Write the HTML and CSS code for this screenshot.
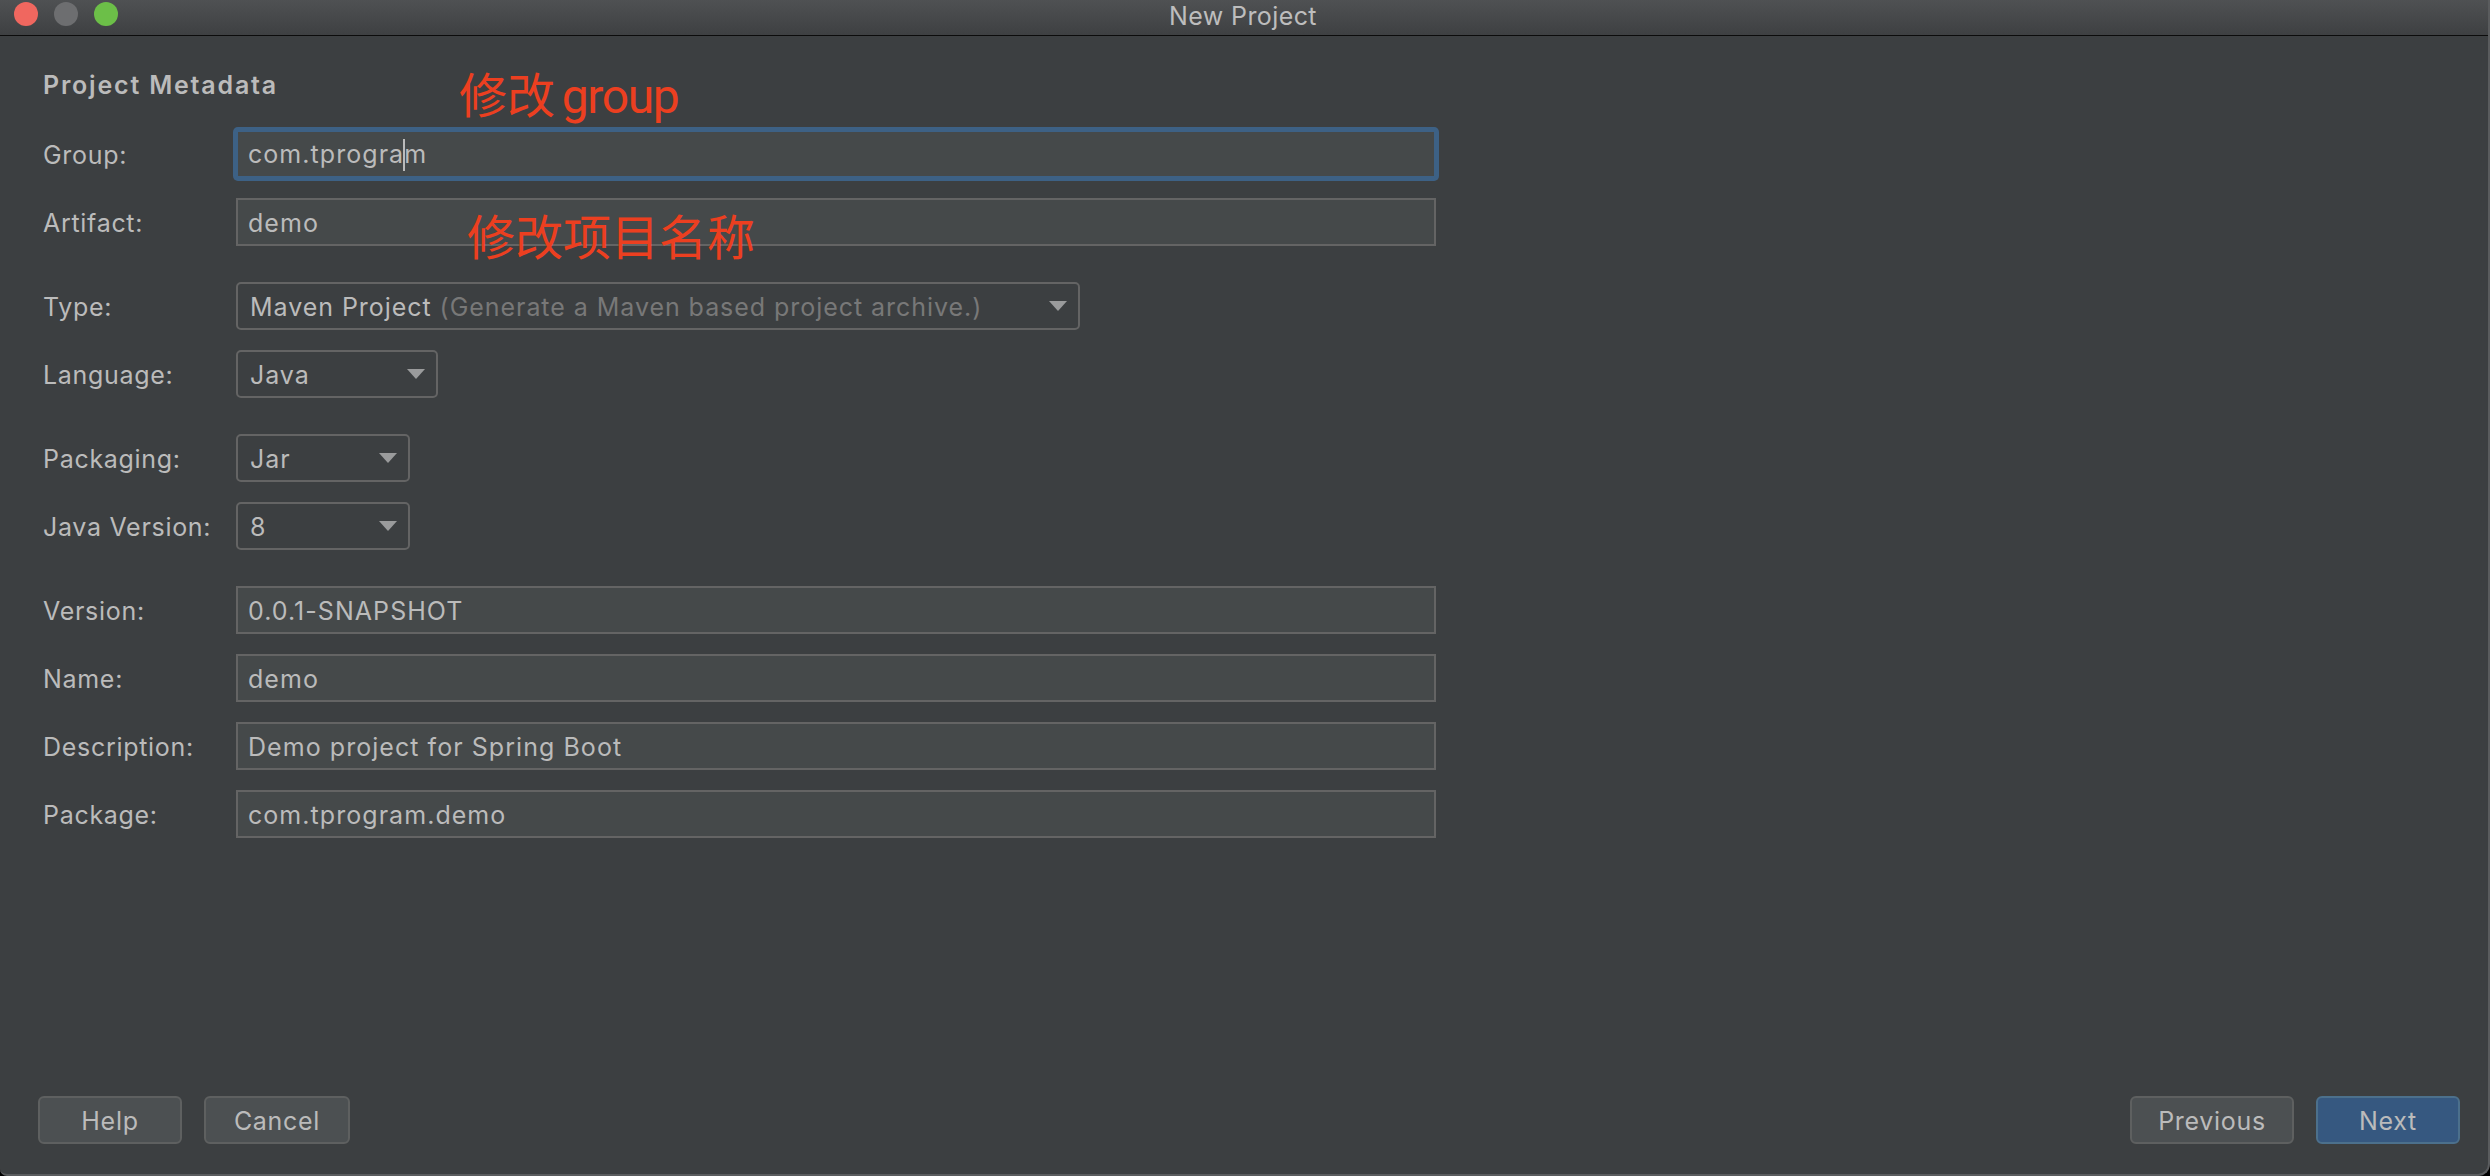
FILE: index.html
```html
<!DOCTYPE html>
<html lang="en">
<head>
<meta charset="utf-8">
<title>New Project</title>
<link rel="stylesheet" href="styles.css">
</head>
<body>
<div class="window">
  <header class="titlebar">
    <div class="lights">
      <span class="light red"></span>
      <span class="light grey"></span>
      <span class="light green"></span>
    </div>
    <div class="title">New Project</div>
  </header>
  <main class="content">
    <h1 class="heading">Project Metadata</h1>
    <div class="form">
      <section class="group">
        <div class="row"><span class="label">Group:</span><div class="field focus"><span class="caret-wrap">com.tprogra<span class="caret"></span>m</span></div></div>
        <div class="row"><span class="label">Artifact:</span><div class="field">demo</div></div>
      </section>
      <section class="group">
        <div class="row"><span class="label">Type:</span><div class="select w-type"><span>Maven Project <span class="hint">(Generate a Maven based project archive.)</span></span><span class="arrow"></span></div></div>
        <div class="row"><span class="label">Language:</span><div class="select w-lang"><span>Java</span><span class="arrow"></span></div></div>
      </section>
      <section class="group">
        <div class="row"><span class="label">Packaging:</span><div class="select w-pack"><span>Jar</span><span class="arrow"></span></div></div>
        <div class="row"><span class="label">Java Version:</span><div class="select w-pack"><span>8</span><span class="arrow"></span></div></div>
      </section>
      <section class="group">
        <div class="row"><span class="label">Version:</span><div class="field">0.0.1-SNAPSHOT</div></div>
        <div class="row"><span class="label">Name:</span><div class="field">demo</div></div>
        <div class="row"><span class="label">Description:</span><div class="field">Demo project for Spring Boot</div></div>
        <div class="row"><span class="label">Package:</span><div class="field">com.tprogram.demo</div></div>
      </section>
    </div>
    <footer class="footer">
      <div class="btns">
        <button class="btn w-help">Help</button>
        <button class="btn w-cancel">Cancel</button>
      </div>
      <div class="btns">
        <button class="btn w-prev">Previous</button>
        <button class="btn primary w-help">Next</button>
      </div>
    </footer>
  </main>
  <div class="note note-group">修改 <span class="note-latin">group</span></div>
  <div class="note note-name">修改项目名称</div>
</div>
</body>
</html>
```
FILE: styles.css
```css
* { box-sizing: border-box; }
html, body { margin: 0; height: 100%; background: #000; }
body { width: 2490px; height: 1176px; overflow: hidden; font-family: "Inter", "Liberation Sans", sans-serif; }
.window { position: relative; width: 2490px; height: 1176px; display: flex; flex-direction: column; background: #3c3f41; border-radius: 0 0 12px 7px; border-bottom: 2px solid #5a5c5e; border-right: 2px solid #5a5c5e; color: #bbbbbb; font-size: 25px; overflow: hidden; }
.titlebar { position: relative; height: 36px; flex: none; display: flex; align-items: center; justify-content: center; background: linear-gradient(#4f5153, #3e4042); border-bottom: 1px solid #0c0c0c; }
.lights { position: absolute; left: 14px; top: 2px; display: flex; gap: 16px; }
.light { width: 24px; height: 24px; border-radius: 50%; }
.red { background: #f0675f; }
.grey { background: #6d6e70; }
.green { background: #6cbf48; }
.title { font-size: 25px; color: #bdbdbd; line-height: 30px; letter-spacing: 0.4px; margin: 0 2px 4px 0; }
.content { flex: 1; display: flex; flex-direction: column; padding: 0 28px 30px 38px; }
.heading { margin: 34px 0 0 5px; font-size: 25px; line-height: 30px; font-weight: 600; letter-spacing: 1.8px; color: #bbbbbb; }
.form { margin: 30px 0 0 5px; display: flex; flex-direction: column; gap: 36px; }
.group { display: flex; flex-direction: column; gap: 20px; }
.row { display: flex; align-items: center; height: 48px; }
.label { width: 193px; flex: none; padding-top: 2px; letter-spacing: 0.7px; }
.field { width: 1200px; height: 48px; padding: 2px 10px 0; display: flex; align-items: center; background: #45494a; border: 2px solid #646464; letter-spacing: 1.05px; }
.field.focus { border-color: #3d6185; box-shadow: 0 0 0 3px #3d6185; border-radius: 2px; }
.caret-wrap { position: relative; }
.caret { display: inline-block; width: 2px; height: 32px; margin: 0 -1px; background: #bbbbbb; vertical-align: -8px; }
.select { height: 48px; padding: 2px 11px 0 12px; display: flex; align-items: center; justify-content: space-between; border: 2px solid #646464; border-radius: 5px; letter-spacing: 0.95px; }
.w-type { width: 844px; }
.w-lang { width: 202px; }
.w-pack { width: 174px; }
.hint { color: #787878; }
.arrow { width: 0; height: 0; margin-top: -2px; border-left: 9px solid transparent; border-right: 9px solid transparent; border-top: 10px solid #9a9b9c; }
.footer { margin-top: auto; display: flex; justify-content: space-between; }
.btns { display: flex; gap: 22px; }
.btn { height: 48px; padding: 2px 0 0; font: inherit; letter-spacing: 0.7px; color: #bbbbbb; background: #4c5052; border: 2px solid #5e6060; border-radius: 6px; }
.primary { background: #365880; border-color: #4c708c; }
.w-help { width: 144px; }
.w-cancel { width: 146px; }
.w-prev { width: 164px; }
.note { position: absolute; color: #ec3f20; font-size: 48px; line-height: 56px; font-family: "Noto Sans CJK SC", "Liberation Sans", sans-serif; white-space: nowrap; }
.note-latin { font-family: "Roboto", sans-serif; letter-spacing: -1.4px; margin-left: -4px; }
.note-group { left: 459px; top: 64px; }
.note-name { left: 467px; top: 206px; }
```
